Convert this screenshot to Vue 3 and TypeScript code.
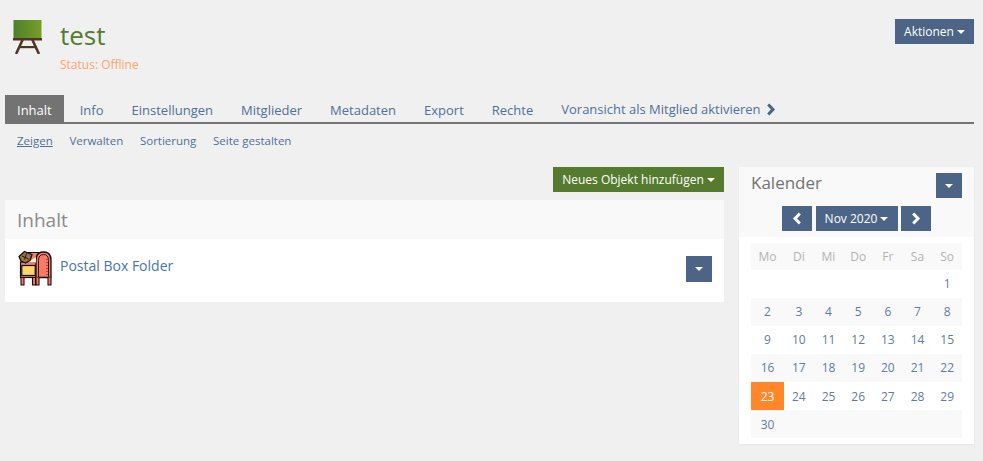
<script setup lang="ts">
const tabs: string[] = ['Info', 'Einstellungen', 'Mitglieder', 'Metadaten', 'Export', 'Rechte']
const subtabs: string[] = ['Verwalten', 'Sortierung', 'Seite gestalten']
const weekdays: string[] = ['Mo', 'Di', 'Mi', 'Do', 'Fr', 'Sa', 'So']
const weeks: (number | null)[][] = [
  [null, null, null, null, null, null, 1],
  [2, 3, 4, 5, 6, 7, 8],
  [9, 10, 11, 12, 13, 14, 15],
  [16, 17, 18, 19, 20, 21, 22],
  [23, 24, 25, 26, 27, 28, 29],
  [30, null, null, null, null, null, null],
]
</script>

<template>
  <div class="page">
    <header class="head">
      <svg class="board" width="30" height="34" viewBox="0 0 30 34">
        <defs>
          <linearGradient id="bg" x1="0" x2="1" y1="0" y2="0">
            <stop offset="0" stop-color="#4f7f2a" />
            <stop offset="1" stop-color="#74a026" />
          </linearGradient>
        </defs>
        <rect x="0.5" y="0" width="28" height="19" fill="url(#bg)" />
        <rect x="0" y="18" width="29" height="2.5" fill="#4f3527" />
        <path d="M9.5 20 L3.5 33 M19.5 20 L25.5 33" stroke="#4f3527" stroke-width="2.6" stroke-linecap="round" fill="none" />
        <rect x="6" y="26" width="17" height="2.2" fill="#4f3527" />
      </svg>
      <div class="title-block">
        <h1>test</h1>
        <div class="status">Status: Offline</div>
      </div>
      <button class="btn actions">Aktionen <span class="caret"></span></button>
    </header>

    <nav class="tabs">
      <a class="tab active">Inhalt</a>
      <a v-for="t in tabs" :key="t" class="tab">{{ t }}</a>
      <a class="tab preview">
        Voransicht als Mitglied aktivieren
        <svg width="10" height="13" viewBox="0 0 10 13"><path d="M2.2 1.5 L7 6.5 L2.2 11.5" fill="none" stroke="#4c6586" stroke-width="3" /></svg>
      </a>
    </nav>

    <nav class="subtabs">
      <a class="current">Zeigen</a>
      <a v-for="s in subtabs" :key="s">{{ s }}</a>
    </nav>

    <div class="columns">
      <main class="main">
        <div class="toolbar">
          <button class="btn add">Neues Objekt hinzufügen <span class="caret"></span></button>
        </div>
        <section class="panel">
          <h2 class="panel-head">Inhalt</h2>
          <div class="item">
            <svg class="mailbox" width="34" height="36" viewBox="0 0 34 36">
              <path d="M4 5 Q5 2.5 8 2.5 H26 V12 H4 Z" fill="#fb7a66" stroke="#111" stroke-width="1.2" />
              <rect x="2.5" y="12" width="16" height="15.5" fill="#fb7a66" stroke="#111" stroke-width="1.2" />
              <rect x="3.8" y="15.5" width="13.4" height="10" fill="#fcd56a" stroke="#111" stroke-width="1.2" />
              <path d="M3 27.5 H6 V35 H3 Z M14.5 27.5 H17.5 V35 H14.5 Z" fill="#fb7a66" stroke="#111" stroke-width="1.1" />
              <path d="M18 27.5 V10 Q18 2 25.5 2 Q33 2 33 10 V27.5 Z" fill="#fb7a66" stroke="#111" stroke-width="1.3" stroke-linejoin="round" />
              <path d="M20.5 27 V10.5 Q20.5 4.5 25.5 4.5 Q30.5 4.5 30.5 10.5 V27" fill="none" stroke="#111" stroke-width="0.9" />
              <path d="M18 27.5 V35 H21 V27.5 M30 27.5 V35 H33 V27.5" fill="#fb7a66" stroke="#111" stroke-width="1.1" />
              <path d="M29 9 V25" stroke="#222" stroke-width="0.9" stroke-dasharray="1 2" />
              <path d="M9 12.5 L18 7 V12.5 Z" fill="#fff1cf" />
              <path d="M1 6.5 L6.5 1.5 L14 4.5 L12 10.5 L7.5 13 L3 11 Z" fill="#9a7248" stroke="#111" stroke-width="1.3" stroke-linejoin="round" />
              <path d="M4 6 L10.5 9 M8.5 3.5 L6.5 9.5" stroke="#2b1c10" stroke-width="1" />
            </svg>
            <a class="item-link">Postal Box Folder</a>
            <button class="btn square"><span class="caret"></span></button>
          </div>
        </section>
      </main>

      <aside class="calendar">
        <div class="cal-head">
          <div class="cal-title">
            <h2>Kalender</h2>
            <button class="btn square small"><span class="caret"></span></button>
          </div>
          <div class="cal-nav">
            <button class="btn nav">
              <svg width="10" height="13" viewBox="0 0 10 13"><path d="M7.8 1.5 L3 6.5 L7.8 11.5" fill="none" stroke="#fff" stroke-width="3" /></svg>
            </button>
            <button class="btn month">Nov 2020 <span class="caret"></span></button>
            <button class="btn nav next">
              <svg width="10" height="13" viewBox="0 0 10 13"><path d="M2.2 1.5 L7 6.5 L2.2 11.5" fill="none" stroke="#fff" stroke-width="3" /></svg>
            </button>
          </div>
        </div>
        <div class="cal-body">
          <div class="grid-row heading">
            <span v-for="d in weekdays" :key="d">{{ d }}</span>
          </div>
          <div v-for="(w, i) in weeks" :key="i" class="grid-row" :class="{ zebra: i % 2 === 1, low: i > 3 }">
            <span v-for="(d, j) in w" :key="j" :class="{ today: d === 23 }">{{ d }}</span>
          </div>
        </div>
      </aside>
    </div>
  </div>
</template>

<style>
html, body { margin: 0; background: #f0f0f0; }
</style>

<style scoped>
.page {
  width: 983px;
  height: 461px;
  overflow: hidden;
  box-sizing: border-box;
  padding: 0 9px 0 5px;
  font-family: "Open Sans", sans-serif;
  color: #4f7099;
  background: #f0f0f0;
}
.head {
  display: flex;
  align-items: flex-start;
  height: 95px;
  padding: 19px 0 0 8px;
  box-sizing: border-box;
}
.board { margin-top: 1px; flex: none; }
.title-block { margin-left: 17px; flex: 1; }
h1 {
  margin: 0;
  font-size: 26px;
  line-height: 33px;
  font-weight: 400;
  color: #557b2e;
}
.status {
  margin-top: 4px;
  font-size: 12px;
  line-height: 17px;
  color: #ffa468;
}
.btn {
  border: 0;
  margin: 0;
  padding: 0;
  background: #4c6586;
  color: #fff;
  font-family: inherit;
  font-size: 12px;
  height: 25px;
  display: inline-flex;
  align-items: center;
  justify-content: center;
  gap: 3px;
}
.caret {
  display: inline-block;
  width: 0;
  height: 0;
  border-left: 4px solid transparent;
  border-right: 4px solid transparent;
  border-top: 4px solid #fff;
}
.actions { width: 79px; }
.tabs {
  display: flex;
  height: 29px;
  box-sizing: border-box;
  border-bottom: 2px solid #737373;
  gap: 4px;
}
.tab {
  padding: 0 12px;
  font-size: 13px;
  line-height: 31px;
  height: 27px;
  white-space: nowrap;
}
.tab.active { background: #737373; color: #fff; }
.preview { display: flex; align-items: center; gap: 5px; line-height: 27px; padding-top: 2px; height: 25px; }
.subtabs {
  display: flex;
  gap: 16.7px;
  padding: 0 0 0 12px;
  height: 43px;
  align-items: flex-start;
  font-size: 11.5px;
  line-height: 34px;
}
.subtabs a { height: 26px; }
.subtabs .current { text-decoration: underline; }
.columns { display: flex; gap: 15px; }
.main { width: 719px; flex: none; }
.toolbar { display: flex; justify-content: flex-end; height: 33px; }
.add { width: 171px; background: #557b2e; }
.panel { background: #fff; }
.panel-head {
  margin: 0;
  height: 39px;
  padding-left: 12px;
  background: #f9f9f9;
  font-size: 19px;
  font-weight: 400;
  line-height: 41px;
  color: #8a8a8a;
}
.item {
  display: flex;
  align-items: flex-start;
  height: 63px;
  padding: 11px 12px 0 13px;
  box-sizing: border-box;
}
.mailbox { flex: none; }
.item-link { margin-left: 8px; flex: 1; font-size: 14px; line-height: 32px; color: #4a74a8; }
.square { width: 26px; height: 26px; margin-top: 6px; flex: none; }
.square.small { height: 25px; margin-top: 6px; }
.calendar {
  width: 235px;
  height: 277px;
  flex: none;
  background: #fff;
  box-shadow: 0 1px 2px rgba(0, 0, 0, 0.05);
}
.cal-head { background: #f9f9f9; height: 70px; box-sizing: border-box; padding: 0 12px; }
.cal-title { display: flex; justify-content: space-between; align-items: flex-start; height: 39px; }
.cal-title h2 { margin: 0; font-size: 17px; font-weight: 400; line-height: 31px; color: #737373; }
.cal-nav { display: flex; justify-content: center; gap: 4px; margin-right: 1px; }
.cal-nav .nav { width: 30px; }
.cal-nav .next { margin-left: -1px; }
.cal-nav .month { width: 82px; }
.cal-body { padding: 6px 12px 0; }
.grid-row {
  display: grid;
  grid-template-columns: 33px repeat(6, 1fr);
  grid-template-rows: 28px;
  height: 28px;
  font-size: 12px;
  line-height: 28px;
  text-align: center;
  color: #5f7ca0;
}
.zebra { background: #f9f9f9; }
.low { line-height: 30px; }
.heading { background: #f9f9f9; height: 27px; grid-template-rows: 27px; line-height: 27px; color: #b3b3b3; font-weight: 400; }
.today { background: #ff8629; color: #fff; }
</style>
